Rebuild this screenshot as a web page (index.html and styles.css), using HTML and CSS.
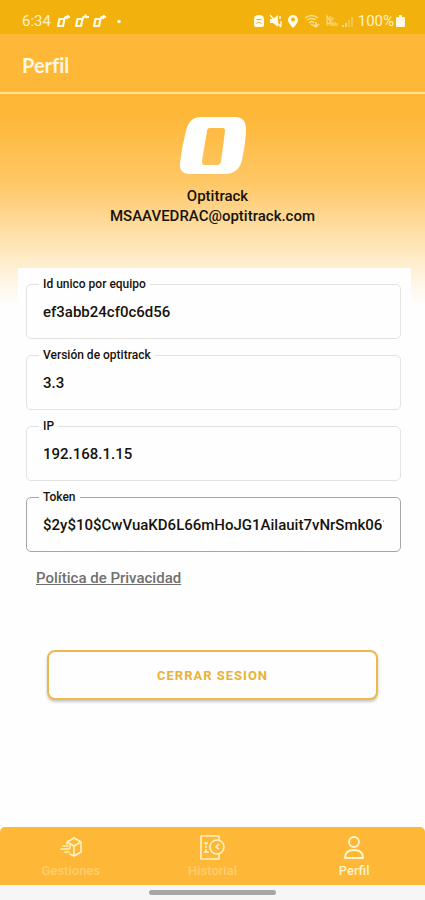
FILE: index.html
```html
<!DOCTYPE html>
<html lang="es">
<head>
<meta charset="utf-8">
<meta name="viewport" content="width=device-width, initial-scale=1">
<title>Perfil</title>
<link rel="stylesheet" href="styles.css">
</head>
<body>
<div class="statusbar">
  <span class="clock">6:34</span>
  <svg class="notices" width="66" height="16" viewBox="0 0 66 16" fill="none" stroke="#fffbe8" stroke-width="2.200" stroke-linejoin="round">
    <path d="M4.500 6H9.500L8 13H3zM9.500 6L10.500 4H15M13 2L12 6"/>
    <path d="M22.500 6H27.500L26 13H21zM27.500 6L28.500 4H34M30 1.500L32 5"/>
    <path d="M40.500 6H45.500L44 13H39zM45.500 6L46.500 4H51M49 2L48 6"/>
    <circle cx="64" cy="8.500" r="1.800" fill="#fffbe8" stroke="none"/>
  </svg>
  <svg class="signals" width="102" height="16" viewBox="0 0 102 16" fill="#fffbe8">
    <path d="M0 6Q0 2 5 2T10 6V12Q10 14 8 14H2Q0 14 0 12z"/>
    <path d="M2.500 6.500H7.500M2.500 11Q5 7.500 7.500 11" stroke="#f2b10c" fill="none"/>
    <path d="M16 6H19L24 2V14L19 10H16z"/>
    <path d="M16 2L27 14M26 3V6M27 8V13" stroke="#fffbe8" stroke-width="1.400"/>
    <path d="M39 2a5 5 0 0 0-5 5q0 3 5 8q5-5 5-8a5 5 0 0 0-5-5z"/>
    <circle cx="39" cy="6.500" r="2" fill="#f2b10c"/>
    <g fill="none" stroke="#fbe196" stroke-width="1.500">
      <path d="M51 5Q57.500 0 64 5M53 7Q57.500 4 62 7M55 10Q57.500 7 60 10M57 11L60 13M62 9V14M60 12L62 14L65 11"/>
    </g>
    <g fill="none" stroke="#f9d980" stroke-width="1.200">
      <path d="M73 8V3L76 8V3M78 8V5H80M73 13V9L75 11L77 9V13M79 13V9M81 9V13M83 10V13"/>
    </g>
    <path d="M88 14V12H90V14zM91 14V10H93V14z" fill="#f9d980"/>
    <path d="M94 14V7H96V14zM97 14V4H99V14z" fill="#f5c550"/>
  </svg>
  <span class="charge">100%</span>
  <svg class="battery" width="9" height="16" viewBox="0 0 9 16" fill="#fffbe8"><path d="M3 2H6V4H8Q9 4 9 5V13Q9 14 8 14H1Q0 14 0 13V5Q0 4 1 4H3z"/></svg>
</div>
<header class="titlebar"><h1>Perfil</h1></header>
<main>
  <section class="account">
    <svg class="logo" width="68" height="60" viewBox="0 0 68 60" role="img" aria-label="Optitrack">
      <path fill="#fff" fill-rule="evenodd" d="M22 1H56Q67 1 67 13Q67 25 63 44Q60 58 45 58H11Q0 58 1 47Q3 30 7 15Q10 1 22 1zM31 12Q28 12 28 15L23 45Q23 49 25 49H38Q41 49 42 46L46 15Q46 12 44 12z"/>
    </svg>
    <p class="name">Optitrack</p>
    <p>MSAAVEDRAC@optitrack.com</p>
  </section>
  <form class="card">
    <fieldset class="field"><legend><label for="device">Id unico por equipo</label></legend><input id="device" type="text" value="ef3abb24cf0c6d56" readonly></fieldset>
    <fieldset class="field"><legend><label for="version">Versión de optitrack</label></legend><input id="version" type="text" value="3.3" readonly></fieldset>
    <fieldset class="field"><legend><label for="ip">IP</label></legend><input id="ip" type="text" value="192.168.1.15" readonly></fieldset>
    <fieldset class="field field-strong"><legend><label for="token">Token</label></legend><input id="token" type="text" value="$2y$10$CwVuaKD6L66mHoJG1Ailauit7vNrSmk061" readonly></fieldset>
    <a class="privacy" href="#privacidad">Política de Privacidad</a>
    <button class="logout" type="button">CERRAR SESION</button>
  </form>
</main>
<nav class="tabs">
  <a href="#gestiones">
    <svg width="28" height="26" viewBox="0 0 28 26" fill="none" stroke="#fff3c4" stroke-width="1.600" stroke-linejoin="round" stroke-linecap="round"><path d="M10 9V7L17 3L24 7V17L17 21L13 19M10 7L17 11L24 7M17 11V21M13 9V13M6 11H11M4 14H12M8 17H12"/></svg>
    <span>Gestiones</span>
  </a>
  <a href="#historial">
    <svg width="28" height="26" viewBox="0 0 28 26" fill="none" stroke="#fff3c4" stroke-width="1.600" stroke-linejoin="round"><path d="M21 5V1H3V24H21V19M6 8H10M7 12H9M6 17H11M8 8V10M8 14V17"/><circle cx="19" cy="12" r="7"/><path d="M21 9L18 12L21 14"/></svg>
    <span>Historial</span>
  </a>
  <a class="active" href="#perfil" aria-current="page">
    <svg width="28" height="26" viewBox="0 0 28 26" fill="none" stroke="#fff6d2" stroke-width="1.800" stroke-linejoin="round"><circle cx="14" cy="7" r="5"/><path d="M5 23Q5 15 14 15T23 23z"/></svg>
    <span>Perfil</span>
  </a>
</nav>
<div class="gesture"><span></span></div>
</body>
</html>
```
FILE: styles.css
```css
* { box-sizing: border-box; }

body {
  margin: 0;
  min-height: 100vh;
  display: flex;
  flex-direction: column;
  background: #fefefe;
  color: #17130c;
  font-family: Roboto, "Liberation Sans", sans-serif;
  font-size: 15px;
  font-weight: 500;
}

.statusbar {
  height: 34px;
  padding: 7px 20px 0 22px;
  display: flex;
  align-items: center;
  background: #f2b10c;
  color: #fff3c8;
  font-weight: 400;
}
.notices { margin-left: 4px; }
.signals { margin-left: auto; }
.charge { margin-left: 2px; }
.battery { margin-left: 2px; }

.titlebar {
  height: 60px;
  padding: 4px 22px 0;
  display: flex;
  align-items: center;
  background: #feb737;
  border-bottom: 2px solid #ffe38f;
}
.titlebar h1 {
  margin: 0;
  color: #fff8e2;
  font-family: Lato, Roboto, sans-serif;
  font-size: 20px;
  font-weight: 700;
  font-variant-ligatures: none;
}

main {
  flex: 1;
  background: linear-gradient(#feb737 0, #feb737 20px, #fec867 90px, #fee0a9 140px, #fff0d4 175px, #fefefe 210px);
}

.account {
  height: 174px;
  padding-top: 22px;
  display: flex;
  flex-direction: column;
  align-items: center;
  line-height: 20px;
}
.account p { margin: 0; }
.account .name { padding-left: 10px; }
.logo { margin-bottom: 10px; }

.card {
  margin: 0 14px 0 18px;
  padding: 10px 10px 0 8px;
  display: flex;
  flex-direction: column;
  gap: 10px;
  background: #fefefe;
}

.field {
  min-width: 0;
  height: 61px;
  margin: 0;
  padding: 0 16px;
  border: 1px solid #e2e2e2;
  border-radius: 5px;
}
.field-strong { border-color: #a6a6a6; }
.field legend {
  margin-left: -4px;
  padding: 0 4px;
  font-size: 12px;
  line-height: 12px;
}
.field label { display: block; }
.field input {
  display: block;
  width: 100%;
  height: 44px;
  padding: 0;
  border: 0;
  outline: 0;
  background: transparent;
  color: inherit;
  font: inherit;
}

.privacy {
  align-self: flex-start;
  margin: 6px 0 0 10px;
  color: #707070;
  line-height: 20px;
}

.logout {
  height: 50px;
  margin: 52px 23px 0 21px;
  border: 2px solid #edb94e;
  border-radius: 8px;
  background: #fefefe;
  box-shadow: 0 2px 3px #00000038;
  color: #e9b236;
  font: inherit;
  font-size: 13px;
  font-weight: 700;
  letter-spacing: 1px;
}

.tabs {
  height: 58px;
  display: grid;
  grid-template-columns: repeat(3, 1fr);
  background: #feb737;
  border-radius: 5px 5px 0 0;
}
.tabs a {
  padding-top: 8px;
  display: flex;
  flex-direction: column;
  align-items: center;
  gap: 2px;
  color: #ffce6c;
  font-size: 13px;
  line-height: 16px;
  text-decoration: none;
}
.tabs .active { color: #fff3c8; }

.gesture {
  height: 15px;
  display: flex;
  align-items: center;
  justify-content: center;
  background: #f6f6f6;
}
.gesture span {
  width: 30%;
  height: 5px;
  border-radius: 3px;
  background: #a6a6a6;
}
```
